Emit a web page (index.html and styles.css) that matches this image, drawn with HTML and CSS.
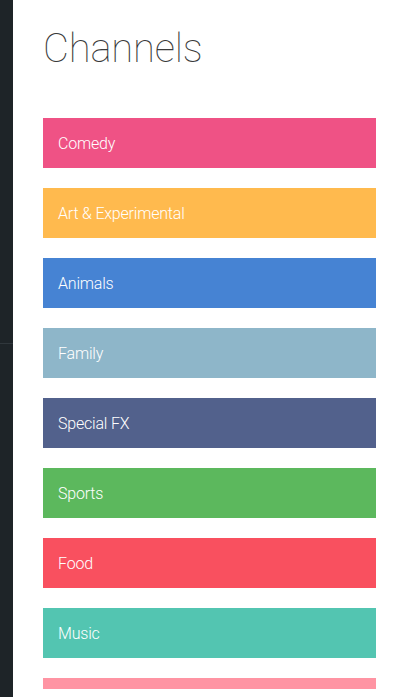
FILE: index.html
```html
<!DOCTYPE html>
<html>
<head>
<meta charset="utf-8">
<link rel="stylesheet" href="styles.css">
</head>
<body>
<div class="app">
  <aside class="rail">
    <div class="rail-top"></div>
    <div class="rail-bottom"></div>
  </aside>
  <main class="panel">
    <h1 class="title">Channels</h1>
    <ul class="channels">
      <li class="channel comedy">Comedy</li>
      <li class="channel art">Art &amp; Experimental</li>
      <li class="channel animals">Animals</li>
      <li class="channel family">Family</li>
      <li class="channel fx">Special FX</li>
      <li class="channel sports">Sports</li>
      <li class="channel food">Food</li>
      <li class="channel music">Music</li>
      <li class="channel more"></li>
    </ul>
  </main>
</div>
</body>
</html>
```
FILE: styles.css
```css
html, body {
  margin: 0;
  padding: 0;
  height: 100%;
  background: #ffffff;
}
body {
  font-family: "Roboto", "Liberation Sans", sans-serif;
  overflow: hidden;
}
.app {
  display: flex;
  height: 697px;
}
.rail {
  width: 13px;
  flex: none;
  background: #1e2428;
  display: flex;
  flex-direction: column;
}
.rail-top {
  height: 343px;
  border-bottom: 1px solid #30373c;
}
.rail-bottom {
  flex: 1;
}
.panel {
  flex: 1;
  padding: 0 27px 0 30px;
  display: flex;
  flex-direction: column;
}
.title {
  margin: 25px 0 0;
  height: 93px;
  font-size: 40px;
  line-height: 48px;
  font-weight: 100;
  color: #3a3a3a;
  letter-spacing: -0.2px;
}
.channels {
  list-style: none;
  margin: 0;
  padding: 0;
  height: 571px;
  overflow: hidden;
  display: flex;
  flex-direction: column;
  gap: 20px;
}
.channel {
  flex: none;
  height: 50px;
  padding-left: 15px;
  display: flex;
  align-items: center;
  color: #ffffff;
  font-size: 16px;
  font-weight: 300;
  letter-spacing: -0.2px;
}
.comedy { background: #ef5285; }
.art { background: #ffba4e; }
.animals { background: #4683d3; }
.family { background: #8eb6c9; }
.fx { background: #52618c; }
.sports { background: #5cb85d; }
.food { background: #f9505f; }
.music { background: #53c5b1; }
.more { background: #ff94a3; }
```
